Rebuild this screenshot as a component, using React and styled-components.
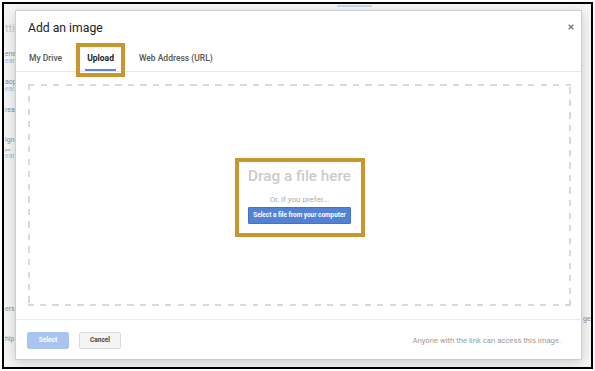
import React from 'react';
import styled, { createGlobalStyle } from 'styled-components';

const Global = createGlobalStyle`
  html, body { margin: 0; padding: 0; background: #fff; }
  body { font-family: Roboto, "Liberation Sans", Arial, sans-serif; }
  * { box-sizing: border-box; }
`;

const Frame = styled.div`
  width: 595px;
  height: 371px;
  padding: 2px;
  background: #fff;
`;

const Screen = styled.div`
  position: relative;
  width: 100%;
  height: 100%;
  border: 2px solid #000;
  overflow: hidden;
  background: #f6f6f6;
`;

/* ---------- page behind the modal ---------- */
const Page = styled.div`
  display: flex;
  height: 100%;
`;

const LeftCol = styled.div`
  width: 12px;
  display: flex;
  flex-direction: column;
  padding: 18px 0 0 1px;
`;

const MidCol = styled.div`
  flex: 1;
  padding-left: 321px;
`;

const TopTab = styled.div`
  width: 35px;
  height: 2px;
  margin-top: 1px;
  background: #c9d7f2;
`;

const RightCol = styled.div`
  width: 9px;
  padding: 311px 0 0 1px;
`;

const BgText = styled.div`
  font-size: ${p => p.$size || 7}px;
  line-height: ${p => p.$lh || 8}px;
  color: ${p => (p.$blue ? '#a7bbe4' : p.$light ? '#c4c4c4' : '#8f8f8f')};
  margin-top: ${p => p.$mt || 0}px;
  white-space: nowrap;
`;

/* ---------- dialog ---------- */
const Dialog = styled.div`
  position: absolute;
  left: 11px;
  top: 6px;
  width: 567px;
  height: 350px;
  background: #fff;
  border: 1px solid #cdcdcd;
  box-shadow: 0 3px 12px rgba(0, 0, 0, 0.18);
  display: flex;
  flex-direction: column;
`;

const Header = styled.div`
  height: 32px;
  padding: 1px 7px 0 12px;
  display: flex;
  align-items: center;
  justify-content: space-between;
`;

const Title = styled.div`
  font-size: 12.2px;
  line-height: 14px;
  color: #222;
`;

const Close = styled.div`
  width: 6px;
  height: 6px;
  display: flex;
  margin-top: -1px;
`;

const Tabs = styled.div`
  height: 29px;
  display: flex;
  gap: 21px;
  padding-left: 11px;
  border-bottom: 1px solid #e6e6e6;
`;

const Tab = styled.div`
  height: 28px;
  padding: 10px 2px 0;
  font-size: 8.5px;
  line-height: 10px;
  font-weight: ${p => (p.$active ? 700 : 500)};
  color: ${p => (p.$active ? '#222' : '#555')};
  border-bottom: 2px solid ${p => (p.$active ? '#5b86d6' : 'transparent')};
  white-space: nowrap;
`;

const Body = styled.div`
  flex: 1;
  padding: 12px 10px 13px 12px;
  display: flex;
`;

const dash = '#d9d9d9';

const DropZone = styled.div`
  flex: 1;
  display: flex;
  flex-direction: column;
  align-items: center;
  justify-content: center;
  background:
    repeating-linear-gradient(90deg, ${dash} 0 6px, transparent 6px 12.5px) left top / 100% 2px no-repeat,
    repeating-linear-gradient(270deg, ${dash} 0 6px, transparent 6px 12.5px) left bottom / 100% 2px no-repeat,
    repeating-linear-gradient(180deg, ${dash} 0 6px, transparent 6px 12.5px) left top / 2px 100% no-repeat,
    repeating-linear-gradient(0deg, ${dash} 0 6px, transparent 6px 12.5px) right top / 2px 100% no-repeat;
`;

const DragText = styled.div`
  font-size: 15.3px;
  line-height: 18px;
  font-weight: 500;
  color: #cbcbcb;
`;

const Prefer = styled.div`
  margin-top: 10px;
  font-size: 8px;
  line-height: 10px;
  color: #ababab;
`;

const PrimaryButton = styled.button`
  margin-top: 2px;
  height: 17px;
  padding: 0 4px;
  border: 1px solid #4273c6;
  border-radius: 1px;
  background: #5282d3;
  color: #fff;
  font-family: inherit;
  font-size: 6.4px;
  font-weight: 700;
  line-height: 15px;
  white-space: nowrap;
`;

const Footer = styled.div`
  height: 40px;
  border-top: 1px solid #ececec;
  padding: 12px 20px 0 11px;
  display: flex;
  align-items: flex-start;
  gap: 10px;
`;

const FootButton = styled.button`
  width: 42px;
  height: 17px;
  padding: 0;
  border-radius: 2px;
  border: 1px solid ${p => (p.$primary ? '#a9c3ee' : '#dadada')};
  background: ${p => (p.$primary ? '#a9c4ef' : '#f4f4f4')};
  color: ${p => (p.$primary ? '#fff' : '#444')};
  font-family: inherit;
  font-size: 6.5px;
  font-weight: 700;
  line-height: 15px;
`;

const Note = styled.div`
  margin-left: auto;
  margin-top: 4px;
  font-size: 7.7px;
  line-height: 10px;
  color: #9a9a9a;
  white-space: nowrap;
`;

/* ---------- annotation highlights ---------- */
const Highlight = styled.div`
  position: absolute;
  left: ${p => p.$x}px;
  top: ${p => p.$y}px;
  width: ${p => p.$w}px;
  height: ${p => p.$h}px;
  border: 4px solid #c9952d;
  pointer-events: none;
`;

export default function App() {
  return (
    <>
      <Global />
      <Frame>
        <Screen>
          <Page>
            <LeftCol>
              <BgText $size={11} $lh={13} $light>tti</BgText>
              <BgText $mt={15}>ene</BgText>
              <BgText $mt={-1} $blue>ear</BgText>
              <BgText $mt={13}>aop</BgText>
              <BgText $mt={-1} $blue>ear</BgText>
              <BgText $mt={13}>rea</BgText>
              <BgText $mt={22}>ign</BgText>
              <BgText $mt={4} $size={4} $lh={4}>per</BgText>
              <BgText $mt={0} $blue>ear</BgText>
              <BgText $mt={145}>ers</BgText>
              <BgText $mt={22}>hip</BgText>
            </LeftCol>
            <MidCol>
              <TopTab />
            </MidCol>
            <RightCol>
              <BgText>ge</BgText>
            </RightCol>
          </Page>

          <Dialog>
            <Header>
              <Title>Add an image</Title>
              <Close>
                <svg width="6" height="6" viewBox="0 0 6 6">
                  <path d="M0.7 0.7L5.3 5.3M5.3 0.7L0.7 5.3" stroke="#7a7a7a" strokeWidth="1.4" />
                </svg>
              </Close>
            </Header>
            <Tabs>
              <Tab>My Drive</Tab>
              <Tab $active>Upload</Tab>
              <Tab>Web Address (URL)</Tab>
            </Tabs>
            <Body>
              <DropZone>
                <DragText>Drag a file here</DragText>
                <Prefer>Or, if you prefer...</Prefer>
                <PrimaryButton>Select a file from your computer</PrimaryButton>
              </DropZone>
            </Body>
            <Footer>
              <FootButton $primary>Select</FootButton>
              <FootButton>Cancel</FootButton>
              <Note>Anyone with the link can access this image.</Note>
            </Footer>
          </Dialog>

          <Highlight $x={72} $y={39} $w={49} $h={34} />
          <Highlight $x={231} $y={154} $w={130} $h={79} />
        </Screen>
      </Frame>
    </>
  );
}
